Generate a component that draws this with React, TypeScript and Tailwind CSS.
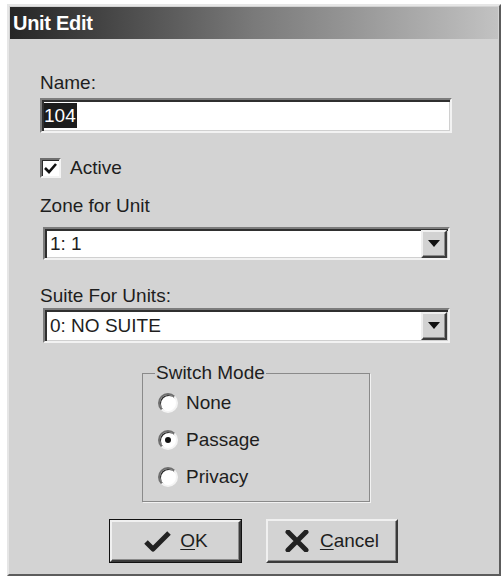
const sunken =
  "bg-white border-2 border-t-[#7c7c7c] border-l-[#7c7c7c] border-b-[#f2f2f2] border-r-[#f2f2f2] shadow-[inset_2px_2px_0_#2f2f2f,inset_-1px_-1px_0_#d0d0d0]";

function DropArrow() {
  return (
    <div className="ml-auto mr-[1px] h-[28px] w-[26px] shrink-0 flex items-center justify-center bg-[#d2d2d2] border-2 border-t-[#efefef] border-l-[#efefef] border-b-[#3c3c3c] border-r-[#3c3c3c] shadow-[inset_-1px_-1px_0_#8a8a8a]">
      <svg width="12" height="7" viewBox="0 0 12 7">
        <path d="M0 0 H12 L6 7 Z" fill="#111" />
      </svg>
    </div>
  );
}

function ComboBox({ value, h }: { value: string; h: string }) {
  return (
    <div className={`ml-[3px] w-[407px] ${h} ${sunken} flex items-center pl-[5px]`}>
      <span className="text-[19px] leading-[22px] text-[#1e1e1e]">{value}</span>
      <DropArrow />
    </div>
  );
}

function Radio({ label, checked }: { label: string; checked?: boolean }) {
  return (
    <div className="flex items-center h-[22px]">
      <div className="ml-[3px] w-[20px] h-[20px] rounded-full bg-white border-2 border-t-[#6e6e6e] border-l-[#6e6e6e] border-b-[#f4f4f4] border-r-[#f4f4f4] shadow-[inset_1px_1px_0_#2c2c2c] flex items-center justify-center">
        {checked && <div className="w-[6px] h-[6px] rounded-full bg-[#111]" />}
      </div>
      <span className="ml-[8px] text-[19px] leading-[22px] text-[#1e1e1e]">{label}</span>
    </div>
  );
}

export default function App() {
  return (
    <div className="w-[504px] h-[576px] bg-white pl-[7px] pt-[4px] font-['Liberation_Sans',Arial,sans-serif]">
      <div className="w-[494px] h-[572px] bg-[#d3d3d3] border-2 border-t-[#e6e6e6] border-l-[#e6e6e6] border-b-[#5c5c5c] border-r-[#5c5c5c] p-[1px] flex flex-col">
        {/* title bar */}
        <div className="h-[32px] flex items-center pl-[3px] bg-gradient-to-r from-[#262626] via-[#7a7a7a] to-[#c2c2c2]">
          <span className="text-white font-bold text-[20px] leading-[24px] tracking-[-0.3px]">Unit Edit</span>
        </div>

        <div className="flex flex-col pl-[30px]">
          <span className="mt-[33px] text-[19px] leading-[22px] text-[#1e1e1e]">Name:</span>
          <div className={`mt-[4px] w-[412px] h-[35px] ${sunken} flex items-center pl-[2px]`}>
            <span className="bg-[#1c1c1c] text-white text-[19px] leading-[25px] pr-[1px]">104</span>
          </div>

          <div className="mt-[25px] flex items-center h-[20px]">
            <div className="w-[21px] h-[20px] bg-white border-2 border-t-[#6e6e6e] border-l-[#6e6e6e] border-b-[#f4f4f4] border-r-[#f4f4f4] shadow-[inset_1px_1px_0_#2c2c2c] flex items-center justify-center">
              <svg width="13" height="11" viewBox="0 0 13 11">
                <path d="M1 5 L5 9 L12 1" fill="none" stroke="#111" strokeWidth="2.6" />
              </svg>
            </div>
            <span className="ml-[9px] text-[19px] leading-[22px] text-[#1e1e1e]">Active</span>
          </div>

          <span className="mt-[17px] text-[19px] leading-[22px] text-[#1e1e1e]">Zone for Unit</span>
          <div className="mt-[10px]">
            <ComboBox value="1: 1" h="h-[33px]" />
          </div>

          <span className="mt-[25px] text-[19px] leading-[22px] text-[#1e1e1e]">Suite For Units:</span>
          <div className="mt-[1px]">
            <ComboBox value="0: NO SUITE" h="h-[35px]" />
          </div>
        </div>

        {/* switch mode group */}
        <div className="mt-[19px] flex justify-center pl-[4px]">
          <fieldset className="w-[228px] h-[140px] border border-[#8a8a8a] shadow-[1px_1px_0_#f2f2f2] px-[12px] pb-0 pt-0">
            <legend className="px-[1px] text-[19px] leading-[22px] text-[#1e1e1e]">Switch Mode</legend>
            <div className="pt-[8px] flex flex-col gap-[15px]">
              <Radio label="None" />
              <Radio label="Passage" checked />
              <Radio label="Privacy" />
            </div>
          </fieldset>
        </div>

        {/* buttons */}
        <div className="mt-[17px] flex justify-center gap-[24px] pr-[1px]">
          <button className="w-[133px] h-[44px] border border-[#111] bg-[#d3d3d3] flex">
            <div className="flex-1 flex items-center justify-center border-2 border-t-[#f0f0f0] border-l-[#f0f0f0] border-b-[#3a3a3a] border-r-[#3a3a3a] shadow-[inset_-1px_-1px_0_#8a8a8a]">
              <svg width="28" height="22" viewBox="0 0 28 22">
                <path d="M3 12 L10 19 L26 3" fill="none" stroke="#222" strokeWidth="5" strokeLinejoin="round" />
              </svg>
              <span className="ml-[9px] text-[19px] leading-[22px] text-[#1e1e1e]">
                <span className="underline underline-offset-2">O</span>K
              </span>
            </div>
          </button>
          <button className="w-[132px] h-[44px] bg-[#d3d3d3] flex items-center justify-center border-2 border-t-[#f0f0f0] border-l-[#f0f0f0] border-b-[#3a3a3a] border-r-[#3a3a3a] shadow-[inset_-1px_-1px_0_#8a8a8a]">
            <svg width="24" height="22" viewBox="0 0 24 22">
              <path d="M3 2 L21 20 M21 2 L3 20" fill="none" stroke="#222" strokeWidth="5" strokeLinecap="round" />
            </svg>
            <span className="ml-[11px] text-[19px] leading-[22px] text-[#1e1e1e]">
              <span className="underline underline-offset-2">C</span>ancel
            </span>
          </button>
        </div>
      </div>
    </div>
  );
}
